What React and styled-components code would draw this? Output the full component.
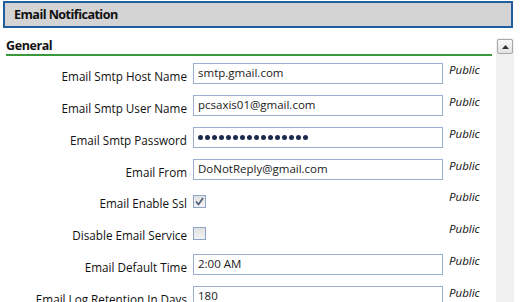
import React from "react";
import styled, { createGlobalStyle } from "styled-components";

const Global = createGlobalStyle`
  html, body { margin: 0; padding: 0; background: #fff; }
  body { font-family: "Open Sans", "Noto Sans", sans-serif; color: #1a1a1a; }
`;

const Page = styled.div`
  width: 525px;
  height: 302px;
  overflow: hidden;
  padding: 1px 0 0 3px;
  box-sizing: border-box;
`;

const Header = styled.div`
  width: 510px;
  height: 27px;
  box-sizing: border-box;
  border: 2px solid #1f5f9f;
  background: #d4d4d4;
  display: flex;
  align-items: center;
  padding-left: 9px;
  font-weight: 700;
  font-size: 12.6px;
  letter-spacing: -0.55px;
  color: #111;
`;

const Body = styled.div`
  display: flex;
  margin-top: 9px;
`;

const Form = styled.div`
  width: 489px;
  padding-left: 3px;
  box-sizing: border-box;
`;

const SectionTitle = styled.div`
  font-weight: 700;
  font-size: 12.5px;
  letter-spacing: -0.4px;
  color: #111;
  line-height: 16px;
  padding-top: 1px;
  border-bottom: 2px solid #3a9a3a;
`;

const Rows = styled.div`
  display: flex;
  flex-direction: column;
  padding-top: 7px;
`;

const Row = styled.div`
  display: grid;
  grid-template-columns: 181px 250px auto;
  column-gap: 6px;
  height: 31.86px;
  align-items: start;
`;

const Label = styled.div`
  text-align: right;
  font-size: 11.7px;
  line-height: 16px;
  padding-top: 5px;
  white-space: nowrap;
  color: #111;
`;

const Input = styled.div`
  height: 21px;
  box-sizing: border-box;
  border: 1px solid #9aaed0;
  background: #fff;
  font-size: 11.5px;
  line-height: 18px;
  padding-left: 4px;
  color: #1a1a1a;
  white-space: nowrap;
  overflow: hidden;
  display: flex;
  align-items: ${(p) => (p.$center ? "center" : "flex-start")};
`;

const Dots = styled.div`
  display: flex;
  gap: 2px;
  padding-top: 1px;
`;

const Dot = styled.span`
  width: 5px;
  height: 5px;
  border-radius: 50%;
  background: #1b2b4e;
`;

const CheckWrap = styled.div`
  padding-top: 5px;
`;

const Check = styled.div`
  width: 13px;
  height: 13px;
  box-sizing: border-box;
  border: 1px solid #8ea4c8;
  background: linear-gradient(#e2e2e2, #f2f2f2);
  display: flex;
  align-items: center;
  justify-content: center;
`;

const Visibility = styled.div`
  font-style: italic;
  font-size: 11.5px;
  line-height: 14px;
  color: #111;
`;

const Scrollbar = styled.div`
  width: 18px;
  margin-left: 4px;
  margin-top: 1px;
  height: 280px;
  background: #f0f0f0;
  display: flex;
  flex-direction: column;
  align-items: center;
`;

const ScrollButton = styled.div`
  width: 16px;
  height: 15px;
  margin-top: 1px;
  box-sizing: border-box;
  border: 1px solid #a8a8a8;
  border-radius: 2px;
  background: linear-gradient(#f8f8f8, #e2e2e2);
  display: flex;
  align-items: center;
  justify-content: center;
`;

const rows = [
  { label: "Email Smtp Host Name", value: "smtp.gmail.com" },
  { label: "Email Smtp User Name", value: "pcsaxis01@gmail.com" },
  { label: "Email Smtp Password", password: true },
  { label: "Email From", value: "DoNotReply@gmail.com" },
  { label: "Email Enable Ssl", check: true, checked: true },
  { label: "Disable Email Service", check: true, checked: false },
  { label: "Email Default Time", value: "2:00 AM" },
  { label: "Email Log Retention In Days", value: "180" },
];

export default function App() {
  return (
    <>
      <Global />
      <Page>
        <Header>Email Notification</Header>
        <Body>
          <Form>
            <SectionTitle>General</SectionTitle>
            <Rows>
              {rows.map((r) => (
                <Row key={r.label}>
                  <Label>{r.label}</Label>
                  {r.check ? (
                    <CheckWrap>
                      <Check>
                        {r.checked && (
                          <svg width="9" height="9" viewBox="0 0 9 9">
                            <path d="M1 4.5 L3.5 7.5 L8 1" fill="none" stroke="#4a5a78" strokeWidth="1.6" />
                          </svg>
                        )}
                      </Check>
                    </CheckWrap>
                  ) : r.password ? (
                    <Input $center>
                      <Dots>
                        {Array.from({ length: 16 }).map((_, i) => (
                          <Dot key={i} />
                        ))}
                      </Dots>
                    </Input>
                  ) : (
                    <Input>{r.value}</Input>
                  )}
                  <Visibility>Public</Visibility>
                </Row>
              ))}
            </Rows>
          </Form>
          <Scrollbar>
            <ScrollButton>
              <svg width="7" height="4" viewBox="0 0 7 4">
                <path d="M0 4 L3.5 0 L7 4 Z" fill="#333" />
              </svg>
            </ScrollButton>
          </Scrollbar>
        </Body>
      </Page>
    </>
  );
}
